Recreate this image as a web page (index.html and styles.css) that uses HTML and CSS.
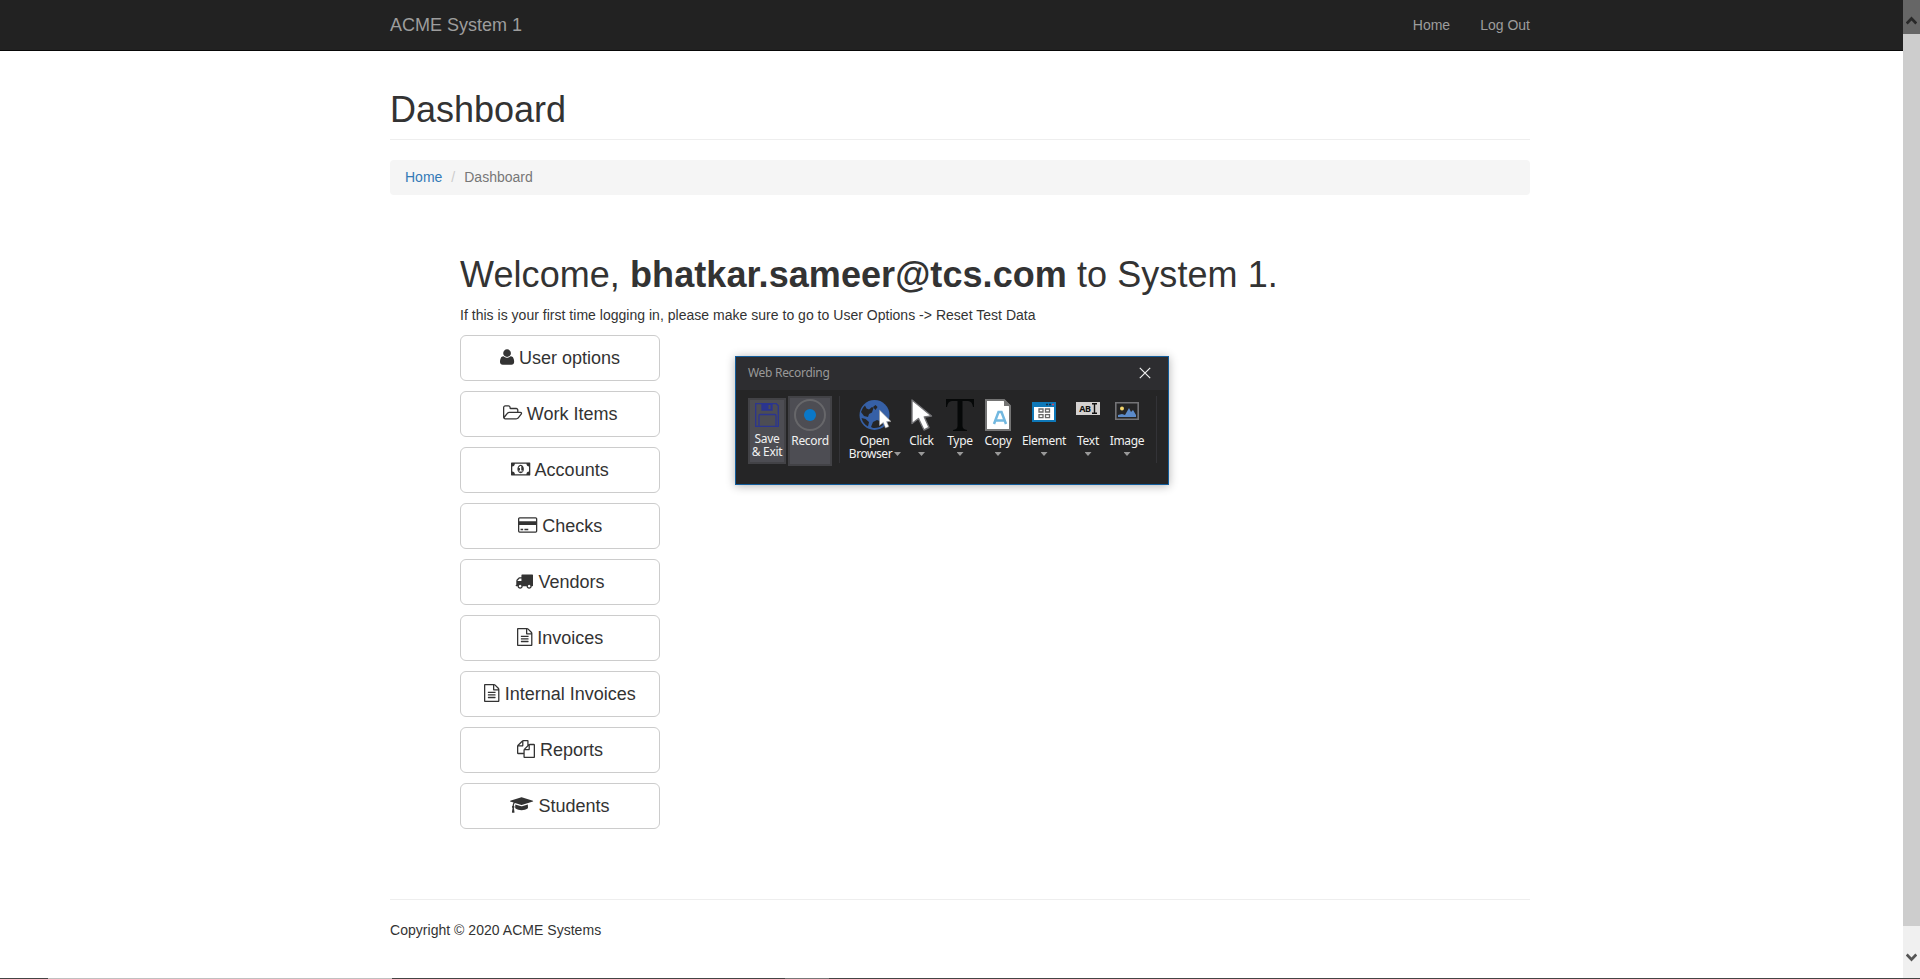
FILE: index.html
```html
<!DOCTYPE html>
<html lang="en">
<head>
<meta charset="utf-8">
<title>ACME System 1 - Dashboard</title>
<link rel="stylesheet" href="styles.css">
</head>
<body>
<nav class="navbar">
  <div class="container navbar-row">
    <a class="brand">ACME System 1</a>
    <div class="nav-links"><a>Home</a><a>Log Out</a></div>
  </div>
</nav>

<main class="container">
  <h1 class="page-header">Dashboard</h1>
  <ol class="breadcrumb"><li><a>Home</a></li><li class="active">Dashboard</li></ol>
  <section class="welcome">
    <h1>Welcome, <b>bhatkar.sameer@tcs.com</b> to System 1.</h1>
    <p>If this is your first time logging in, please make sure to go to User Options -&gt; Reset Test Data</p>
    <div class="menu">
      <button class="btn"><svg class="fa" viewBox="192 0 1408 1792"><path d="M1600 1405q0 120-73 189.500t-194 69.500h-874q-121 0-194-69.500t-73-189.500q0-53 3.500-103.500t14-109 26.500-108.500 43-97.500 62-81 85.500-53.500 111.500-20q9 0 42 21.500t74.500 48 108 48 133.500 21.500 133.500-21.500 108-48 74.500-48 42-21.500q61 0 111.500 20t85.500 53.500 62 81 43 97.500 26.500 108.500 14 109 3.500 103.500zm-320-893q0 159-112.500 271.500t-271.500 112.500-271.500-112.500-112.500-271.500 112.500-271.500 271.500-112.500 271.500 112.500 112.500 271.500z"/></svg> User options</button>
      <button class="btn"><svg class="fa" viewBox="64 0 1920 1792"><path d="M1845 931q0-35-53-35h-1088q-40 0-85.500 21.500t-71.500 52.500l-294 363q-18 24-18 40 0 35 53 35h1088q40 0 86-22t71-53l294-363q18-22 18-39zm-1141-163h768v-160q0-40-28-68t-68-28h-576q-40 0-68-28t-28-68v-64q0-40-28-68t-68-28h-320q-40 0-68 28t-28 68v853l256-315q44-53 116-87.500t140-34.500zm1269 163q0 62-46 120l-295 363q-43 53-116 87.500t-140 34.500h-1088q-92 0-158-66t-66-158v-960q0-92 66-158t158-66h320q92 0 158 66t66 158v32h544q92 0 158 66t66 158v160h192q54 0 99 24.500t67 70.500q15 32 15 68z"/></svg> Work Items</button>
      <button class="btn"><svg class="fa" viewBox="0 0 1920 1792"><path d="M768 1152h384v-96h-128v-448h-114l-148 137 77 80q42-37 55-57h2v288h-128v96zm512-256q0 70-21 142t-59.500 134-101.500 101-138 39-138-39-101.500-101-59.500-134-21-142 21-142 59.500-134 101.500-101 138-39 138 39 101.500 101 59.500 134 21 142zm512 256v-512q-106 0-181-75t-75-181h-1152q0 106-75 181t-181 75v512q106 0 181 75t75 181h1152q0-106 75-181t181-75zm128-832v1152q0 26-19 45t-45 19h-1792q-26 0-45-19t-19-45v-1152q0-26 19-45t45-19h1792q26 0 45 19t19 45z"/></svg> Accounts</button>
      <button class="btn"><svg class="fa" viewBox="0 0 1920 1792"><path d="M1760 128q66 0 113 47t47 113v1216q0 66-47 113t-113 47h-1600q-66 0-113-47t-47-113v-1216q0-66 47-113t113-47h1600zm-1600 128q-13 0-22.500 9.500t-9.500 22.500v224h1664v-224q0-13-9.500-22.500t-22.500-9.500h-1600zm1600 1280q13 0 22.500-9.500t9.500-22.500v-608h-1664v608q0 13 9.500 22.500t22.500 9.500h1600zm-1504-128v-128h256v128h-256zm384 0v-128h384v128h-384z"/></svg> Checks</button>
      <button class="btn"><svg class="fa" viewBox="0 0 1792 1792"><path d="M640 1408q0-52-38-90t-90-38-90 38-38 90 38 90 90 38 90-38 38-90zm-384-512h384v-256h-158q-13 0-22 9l-195 195q-9 9-9 22v30zm1280 512q0-52-38-90t-90-38-90 38-38 90 38 90 90 38 90-38 38-90zm256-1088v1024q0 15-4 26.500t-13.500 18.500-16.500 11.500-23.500 6-22.500 2-25.500 0-22.500-.5q0 106-75 181t-181 75-181-75-75-181h-384q0 106-75 181t-181 75-181-75-75-181h-64q-3 0-22.500.5t-25.500 0-22.500-2-23.500-6-16.500-11.500-13.500-18.500-4-26.500q0-26 19-45t45-19v-320q0-8-.5-35t0-38 2.500-34.500 6.500-37 14-30.500 22.500-30l198-198q19-19 50.500-32t58.500-13h160v-192q0-26 19-45t45-19h1024q26 0 45 19t19 45z"/></svg> Vendors</button>
      <button class="btn"><svg class="fa" viewBox="128 0 1536 1792"><path id="file-text" d="M1596 380q28 28 48 76t20 88v1152q0 40-28 68t-68 28h-1344q-40 0-68-28t-28-68v-1600q0-40 28-68t68-28h896q40 0 88 20t76 48zm-444-244v376h376q-10-29-22-41l-313-313q-12-12-41-22zm384 1528v-1024h-416q-40 0-68-28t-28-68v-416h-768v1536h1280zm-1024-864q0-14 9-23t23-9h704q14 0 23 9t9 23v64q0 14-9 23t-23 9h-704q-14 0-23-9t-9-23v-64zm736 224q14 0 23 9t9 23v64q0 14-9 23t-23 9h-704q-14 0-23-9t-9-23v-64q0-14 9-23t23-9h704zm0 256q14 0 23 9t9 23v64q0 14-9 23t-23 9h-704q-14 0-23-9t-9-23v-64q0-14 9-23t23-9h704z"/></svg> Invoices</button>
      <button class="btn"><svg class="fa" viewBox="128 0 1536 1792"><use href="#file-text"/></svg> Internal Invoices</button>
      <button class="btn"><svg class="fa" viewBox="0 0 1792 1792"><path d="M1696 384q40 0 68 28t28 68v1216q0 40-28 68t-68 28h-960q-40 0-68-28t-28-68v-288h-544q-40 0-68-28t-28-68v-672q0-40 20-88t48-76l408-408q28-28 76-48t88-20h416q40 0 68 28t28 68v328q68-40 128-40h416zm-544 213l-299 299h299v-299zm-640-384l-299 299h299v-299zm196 647l316-316v-416h-384v416q0 40-28 68t-68 28h-416v640h512v-256q0-40 20-88t48-76zm956 804v-1152h-384v416q0 40-28 68t-68 28h-416v640h896z"/></svg> Reports</button>
      <button class="btn"><svg class="fa" viewBox="0 0 2304 1792"><path d="M1774 836l18 316q4 69-82 128t-235 93.500-323 34.500-323-34.500-235-93.500-82-128l18-316 574 181q22 7 48 7t48-7zm530-324q0 23-22 31l-1120 352q-4 1-10 1t-10-1l-652-206q-43 34-71 111.500t-34 178.500q63 36 63 109 0 69-58 107l58 433q2 14-8 25-9 11-24 11h-192q-15 0-24-11-10-11-8-25l58-433q-58-38-58-107 0-73 65-111 11-207 98-330l-333-104q-22-8-22-31t22-31l1120-352q4-1 10-1t10 1l1120 352q22 8 22 31z"/></svg> Students</button>
    </div>
  </section>
  <footer>Copyright © 2020 ACME Systems</footer>
</main>

<div class="recorder">
  <header class="rec-title"><span>Web Recording</span>
    <svg width="12" height="12" viewBox="0 0 12 12"><path d="M.8.8l10.400 10.400M11.200.8L.8 11.200" stroke="#f0f0f0" stroke-width="1.200"/></svg>
  </header>
  <div class="tools">
    <div class="tool boxed save">
      <svg width="24" height="24" viewBox="0 0 24 24" fill="none" stroke="#2b3590" stroke-width="1.300"><path d="M.7.7h20.600l2 2v20.600H.7zM4 23V12.500q0-1 1-1h15q1 0 1 1V23"/><path d="M7 1v6h10V1z" fill="#2b3590"/><path d="M14.500 2v4" stroke="#4d4d53" stroke-width="2"/></svg>
      <span>Save<br>&amp; Exit</span>
    </div>
    <div class="tool boxed record">
      <svg width="32" height="32" viewBox="0 0 32 32"><circle cx="16" cy="16" r="15" fill="none" stroke="#67676a" stroke-width="2"/><circle cx="16" cy="16" r="6" fill="#0a78c8"/></svg>
      <span>Record</span>
    </div>
    <i class="sep"></i>
    <div class="tool open">
      <svg width="32" height="32" viewBox="0 0 32 32"><circle cx="15.500" cy="16" r="15" fill="#3660a6"/><path d="M2 13Q3.500 8.500 6 6.500l1.500 3L10 10.500l3-2.500 1.500 1-1.500 4.500-3 1.500-1 3-4-1zM2.500 19l4 1 3.500 3-1 4.500Q4 25 2.500 19zM14 8l2.500-2 2 2-2 3zM12 28l2-5 4-2 5 2 1 3q-4 3.500-10 3z" fill="#252526"/><path d="M20.500 11v15.500l3.800-3 2.200 5.500 3.300-1.400-2.200-5h4.600z" fill="#fff" stroke="#999" stroke-width=".6"/></svg>
      <span>Open</span><span class="second">Browser</span><i class="caret"></i>
    </div>
    <div class="tool click">
      <svg width="24" height="32" viewBox="0 0 24 32"><path d="M2 1v23.500l6.500-5 5.500 11.500 5-2.500-4.700-10.500 7.200-1z" fill="#fff" stroke="#747477" stroke-width="1.400" stroke-linejoin="round"/></svg>
      <span>Click</span><i class="caret"></i>
    </div>
    <div class="tool type">
      <svg width="28" height="32" viewBox="0 0 28 32"><path d="M0 0h28v8h-1q-.8-6-5-6h-5.500v25q0 3.500 4.500 4v1H7v-1q4.500-.5 4.500-4V2H6Q1.800 2 1 8H0z" fill="#060808"/></svg>
      <span>Type</span><i class="caret"></i>
    </div>
    <div class="tool copy">
      <svg width="26" height="32" viewBox="0 0 26 32"><path d="M1 1h18l6 6v24H1z" fill="#fff" stroke="#747474" stroke-width="2"/><path d="M19 0v7h7z" fill="#747474"/><path d="M9 25l4.500-12h3L21 25M11 21.500h8.500" fill="none" stroke="#72b8e0" stroke-width="2.500"/></svg>
      <span>Copy</span><i class="caret"></i>
    </div>
    <div class="tool element">
      <svg width="24" height="20" viewBox="0 0 24 20"><path fill="#0e78b8" d="M0 0h24v20H0z"/><path fill="#fff" d="M2 5h20v13H2z"/><path d="M14 2.500h2M17 2.500h2" stroke="#172c44" stroke-width="1.500"/><path d="M20 2.500h2" stroke="#d44a5b" stroke-width="1.500"/><path d="M7 7h4v3H7zM13.500 7h4v3h-4zM7 12.700h4v3H7zM13.500 12.700h4v3h-4z" fill="none" stroke="#686868" stroke-width="1.300"/></svg>
      <span>Element</span><i class="caret"></i>
    </div>
    <div class="tool text">
      <div class="abi">AB<svg width="5" height="11" viewBox="0 0 5 11"><path d="M0 .7h5M2.500 1v9M0 10.300h5" stroke="#111" stroke-width="1.400"/></svg></div>
      <span>Text</span><i class="caret"></i>
    </div>
    <div class="tool image">
      <svg width="24" height="18" viewBox="0 0 24 18"><path d="M.8.8h22.400v16.400H.8z" fill="#252526" stroke="#747477" stroke-width="1.600"/><circle cx="7" cy="6.500" r="2" fill="#f4d66c"/><path d="M3 15v-2l4-1 3 1 4-7 2 4 2-2 3 5v2z" fill="#5c8bca"/></svg>
      <span>Image</span><i class="caret"></i>
    </div>
    <i class="sep end"></i>
  </div>
</div>

<div class="scrollbar">
  <div class="arrow up"><svg width="11" height="9" viewBox="0 0 11 9"><path d="M.7 7.500L5.500 2.500l4.800 5" fill="none" stroke="#282828" stroke-width="2.700"/></svg></div>
  <div class="thumb"></div>
  <div class="arrow down"><svg width="11" height="9" viewBox="0 0 11 9"><path d="M.7 1.500l4.800 5 4.800-5" fill="none" stroke="#555" stroke-width="2.700"/></svg></div>
</div>
<div class="taskbar-edge"></div>
</body>
</html>
```
FILE: styles.css
```css
* { box-sizing: border-box; }
body {
  margin: 0;
  height: 979px;
  overflow: hidden;
  position: relative;
  background: #fff;
  color: #333;
  font: 14px/20px "Liberation Sans", Arial, sans-serif;
}
.container { width: 1140px; margin: 0 auto; }
.navbar { height: 51px; background: #222; border-bottom: 1px solid #080808; color: #9d9d9d; }
.navbar-row { display: flex; justify-content: space-between; align-items: center; height: 50px; }
.brand { font-size: 18px; }
.nav-links { display: flex; gap: 30px; }
h1 { margin: 0; font-size: 36px; font-weight: 400; line-height: 39.600px; }
.page-header { margin-top: 39px; height: 50px; border-bottom: 1px solid #eee; }
.breadcrumb {
  display: flex;
  list-style: none;
  margin: 20px 0 0;
  padding: 7px 15px;
  height: 35px;
  border-radius: 4px;
  background: #f5f5f5;
}
.breadcrumb a { color: #337ab7; }
.active { color: #777; }
.active::before { content: "/"; padding: 0 9px 0 9px; color: #ccc; }
.welcome { padding: 60px 70px 0; }
.welcome h1 { letter-spacing: .07px; }
.welcome p { margin: 10px 0; letter-spacing: .02px; }
.menu { display: flex; flex-direction: column; gap: 10px; width: 200px; }
.btn {
  height: 46px;
  padding: 0;
  border: 1px solid #ccc;
  border-radius: 6px;
  background: #fff;
  color: #333;
  font: 18px/24px "Liberation Sans", Arial, sans-serif;
  white-space: nowrap;
}
.fa { height: 18px; vertical-align: -2.600px; fill: currentColor; overflow: visible; }
footer { margin-top: 70px; padding-top: 20px; border-top: 1px solid #eee; letter-spacing: .03px; }

/* Floating recorder window */
.recorder {
  position: absolute;
  left: 735px;
  top: 356px;
  width: 434px;
  height: 129px;
  border: 1px solid #135d9b;
  background: #252526;
  box-shadow: 0 1px 9px rgba(0, 0, 0, .3);
  font: 12px/13px "Noto Sans", sans-serif;
  color: #f1f1f1;
}
.rec-title {
  display: flex;
  justify-content: space-between;
  align-items: center;
  height: 33px;
  padding: 0 17px 2px 12px;
  background: #2d2d30;
  color: #999;
  letter-spacing: -.3px;
}
.tools { display: flex; align-items: flex-start; padding: 6px 0 0 12px; }
.tool {
  display: flex;
  flex-direction: column;
  align-items: center;
  position: relative;
  height: 70px;
  padding-top: 3px;
  text-align: center;
  white-space: nowrap;
  flex: none;
  letter-spacing: -.3px;
}
.tool > span { margin-top: auto; height: 32px; }
.boxed { background: #4d4d53; border: 2px solid #424246; }
.save { width: 38px; height: 66px; margin: 2px 2px 0 0; }
.save > span { height: 30px; }
.record { width: 44px; padding-top: 1px; }
.record > span { height: 30px; }
.open { width: 50px; margin-left: 9px; padding-left: 1px; }
.open > span { height: 13px; }
.open > .second { height: 19px; margin: 0 8px 0 0; letter-spacing: -.45px; }
.click { width: 41px; margin-left: 2px; }
.type { width: 36px; }
.copy { width: 38px; margin-left: 1px; }
.element { width: 44px; margin-left: 5px; padding-top: 6px; }
.text { width: 34px; margin-left: 5px; padding-top: 6px; }
.image { width: 36px; margin-left: 4px; padding-top: 6px; }
.sep { width: 1px; height: 67px; margin-left: 7px; background: #333337; }
.end { margin-left: 11px; }
.caret {
  position: absolute;
  bottom: 10px;
  width: 7px;
  height: 4px;
  background: #999;
  clip-path: polygon(0 0, 100% 0, 50% 100%);
}
.open .caret { left: 45px; }
.abi {
  display: flex;
  align-items: center;
  justify-content: center;
  gap: 1px;
  width: 24px;
  height: 13px;
  background: #d4d1d0;
  color: #111;
  font: bold 9px/13px "Noto Sans", sans-serif;
}

/* Window scrollbar */
.scrollbar {
  position: absolute;
  right: 0;
  top: 0;
  display: flex;
  flex-direction: column;
  width: 17px;
  height: 979px;
  background: #f0f0f0;
}
.arrow { display: flex; justify-content: center; }
.up { height: 34px; padding-top: 16px; background: #666; }
.thumb { height: 892px; background: #cdcdcd; }
.down { padding-top: 27px; }
.taskbar-edge {
  position: absolute;
  left: 0;
  bottom: 0;
  width: 100%;
  height: 1px;
  background: linear-gradient(90deg, #444 48px, #c0c0c0 48px 392px, #444 392px 785px, #777 785px 829px, #444 829px);
}
```
